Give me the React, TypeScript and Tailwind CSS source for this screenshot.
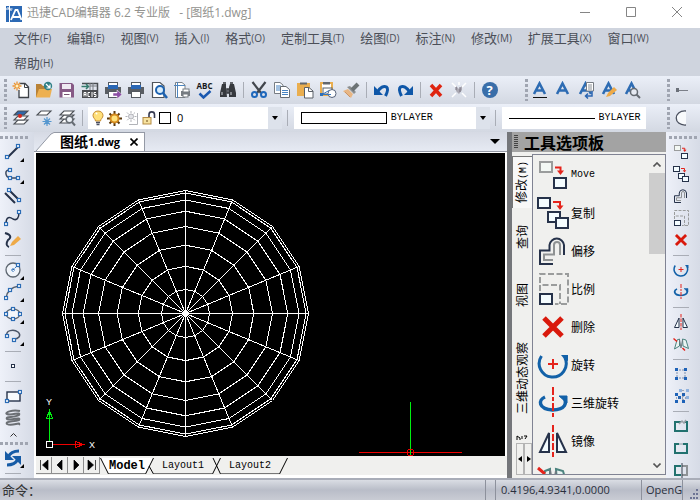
import React from "react";
import type { ReactNode } from "react";

const NAVY = "#26324a";
const RED = "#e5231b";

function Svg({ size = 18, box = 18, children }: { size?: number; box?: number; children: ReactNode }) {
  return (
    <svg width={size} height={size} viewBox={`0 0 ${box} ${box}`} fill="none" className="shrink-0" aria-hidden="true">
      {children}
    </svg>
  );
}

/* ---------- modify icons, shared by the palette (32px) and the right toolbar (16px) ---------- */

type Sized = { size?: number };

const MoveIcon = ({ size = 32 }: Sized) => (
  <Svg size={size} box={32}>
    <rect x="3" y="3" width="12" height="10" stroke="#9a9c9c" strokeWidth="2" fill="#f3f8f4" />
    <rect x="17" y="19" width="12" height="10" stroke={NAVY} strokeWidth="2" fill="#f4fcff" />
    <path d="M18 8.5H23.5V12" stroke={RED} strokeWidth="2" />
    <path d="M20 11.5H27L23.5 16Z" fill={RED} />
  </Svg>
);
const CopyIcon = ({ size = 32 }: Sized) => (
  <Svg size={size} box={32}>
    <rect x="1" y="1" width="12" height="10" stroke={NAVY} strokeWidth="2" fill="#f4fcff" />
    <rect x="11" y="15" width="12" height="10" stroke={NAVY} strokeWidth="2" fill="#f4fcff" />
    <rect x="19" y="21" width="12" height="10" stroke={NAVY} strokeWidth="2" fill="#f4fcff" />
    <path d="M16 5H23V9" stroke={RED} strokeWidth="2" />
    <path d="M19.500 8.500H26.500L23 13Z" fill={RED} />
  </Svg>
);
const OffsetIcon = ({ size = 32 }: Sized) => (
  <Svg size={size} box={32}>
    <path d="M16 29H3V15.500H12.500V10A7.300 7.300 0 0 1 27 10V20" stroke={NAVY} strokeWidth="2" />
    <path d="M16 25H7V19.500H17V10A3 3 0 0 1 23 10V20" stroke="#8f9293" strokeWidth="2" />
  </Svg>
);
const ScaleIcon = ({ size = 32 }: Sized) => (
  <Svg size={size} box={32}>
    <path d="M3 10V1H31V31H18" stroke="#9a9c9c" strokeWidth="2" strokeDasharray="6 2.500" />
    <path d="M3 18V12H23V31" stroke="#9a9c9c" strokeWidth="2" strokeDasharray="6 2.500" />
    <rect x="3" y="21" width="12" height="10" stroke={NAVY} strokeWidth="2" fill="#f4fcff" />
  </Svg>
);
const DeleteIcon = ({ size = 32 }: Sized) => (
  <Svg size={size} box={32}>
    <path d="M7 7L25 25M25 7L7 25" stroke="#d9190c" strokeWidth="5" />
  </Svg>
);
const RotateIcon = ({ size = 32 }: Sized) => (
  <Svg size={size} box={32}>
    <path d="M4.500 7A13.500 13.500 0 1 0 28 9" stroke="#1261a8" strokeWidth="3" />
    <path d="M24 6H31V12L28 11Z" fill="#1261a8" />
    <path d="M16 10V20M11 15H21" stroke={RED} strokeWidth="2" />
  </Svg>
);
const Rotate3dIcon = ({ size = 32 }: Sized) => (
  <Svg size={size} box={32}>
    <path d="M8 10C1 13 1 22 15.500 23C29 22.500 30 16 27 10.500" stroke="#1261a8" strokeWidth="3.500" />
    <path d="M22 9H30V16L26 12.500Z" fill="#1261a8" stroke="#1261a8" />
    <path d="M16 0V30" stroke={RED} strokeWidth="2" strokeDasharray="8 2 4 2" />
  </Svg>
);
const MirrorIcon = ({ size = 32 }: Sized) => (
  <Svg size={size} box={32}>
    <path d="M12 8V27H3ZM20 8V27H29Z" stroke={NAVY} strokeWidth="2" fill="#f4fcff" />
    <path d="M16 0V32" stroke={RED} strokeWidth="2" strokeDasharray="7 2" />
  </Svg>
);
const Mirror3dIcon = ({ size = 32 }: Sized) => (
  <Svg size={size} box={32}>
    <path d="M8 8L13 6V20L3 26ZM19 6L26 8L31 25L20 20Z" stroke="#4c837f" strokeWidth="2" fill="#eaf3f2" />
    <path d="M13 7L16 24M19 8L16 24" stroke="#6f7a80" strokeWidth="2" />
    <path d="M1 5L8 11M19 24L24 29" stroke={RED} strokeWidth="3" />
  </Svg>
);

/* ---------- standard toolbar icons ---------- */

const NewIcon = () => (
  <Svg>
    <path d="M7 2.500H13L16.500 6V16.500H7V9" stroke="#3e4248" strokeWidth="1.300" fill="#fff" />
    <path d="M12.500 2.500V6.500H16.500" stroke="#3e4248" />
    <path d="M5 0.500V9.500M0.500 5H9.500M2 2L8 8M8 2L2 8" stroke="#eb9433" strokeWidth="1.300" />
    <circle cx="5" cy="5" r="1.500" fill="#fff3c0" />
  </Svg>
);
const OpenIcon = () => (
  <Svg>
    <path d="M1 16V3H6L8 5H11V8H15V16Z" fill="#b98237" />
    <path d="M1 16.500L4 8H17L15 16.500Z" fill="#edb050" />
    <circle cx="13" cy="5" r="4.200" fill="#2f7f86" />
    <path d="M11 3L15 7M15 3.500V7H11.500" stroke="#fff" strokeWidth="1.200" />
  </Svg>
);
const SaveIcon = () => (
  <Svg>
    <path d="M1.500 2H14L16 4V16.500H1.500Z" fill="#875a86" />
    <path d="M4 3H13V8H4Z" fill="#efe9f2" />
    <path d="M4.500 11H13V16.500H4.500Z" fill="#fff" />
    <path d="M6 13.500H11.500" stroke="#75506f" />
  </Svg>
);
const AcisIcon = () => (
  <Svg>
    <path d="M1 2.500H16.500V16" stroke="#4a4e52" strokeWidth="1.500" />
    <path d="M9 2V9M12 2V9M9 5H16" stroke="#777b80" />
    <rect x="1" y="9" width="16" height="8" fill="#4a4c50" />
    <path d="M3 15.500V11.500H5V15.500M3 13.500H5M9 11.500H7V15.500H9M11 11V16M15 11.500H13V13.500H15V15.500H13" stroke="#fff" />
    <path d="M0.500 5.500H7M5 3L7.500 5.500L5 8" stroke="#357b6e" strokeWidth="1.500" />
  </Svg>
);
const Printer = () => (
  <>
    <rect x="4.500" y="1.500" width="9" height="5" fill="#fff" stroke="#555a60" />
    <path d="M1 6H17V13H1Z" fill="#5a5e63" />
    <rect x="4" y="4" width="10" height="4" fill="#2a67b5" />
    <rect x="4.500" y="10.500" width="9" height="6" fill="#fff" stroke="#555a60" />
  </>
);
const PrintIcon = () => (
  <Svg>
    <Printer />
  </Svg>
);
const ExportIcon = () => (
  <Svg>
    <Printer />
    <path d="M9 12H13V9L18 13.500L13 18V15H9Z" fill="#8c4fa5" stroke="#fff" strokeWidth=".5" />
  </Svg>
);
const PreviewIcon = () => (
  <Svg>
    <path d="M2.500 1.500H10L14 5V16.500H2.500Z" fill="#fff" stroke="#50555b" strokeWidth="1.200" />
    <circle cx="10" cy="9" r="4" fill="#d9edfb" stroke="#1d62b0" strokeWidth="2" />
    <path d="M13 12L17 17" stroke="#1d62b0" strokeWidth="2.500" />
  </Svg>
);
const PageSetupIcon = () => (
  <Svg>
    <path d="M2.500 1.500H9L12 4V16.500H2.500Z" fill="#fff" stroke="#7d8389" />
    <path d="M4.500 1V17M1 4.500H12" stroke="#4e86c0" />
    <rect x="8" y="10" width="9" height="5" fill="#777c82" />
    <rect x="10" y="8" width="6" height="3" fill="#fff" stroke="#777c82" />
    <rect x="10" y="13" width="5" height="3" fill="#fff" stroke="#777c82" />
  </Svg>
);
const SpellIcon = () => (
  <span className="flex flex-col items-center">
    <span className="font-['Open_Sans',sans-serif] text-[8px] leading-[8px] font-bold text-[#17191c]">ABC</span>
    <svg width="14" height="9" viewBox="0 0 14 9" fill="none">
      <path d="M1.500 3.500L5.500 7.500L12.500 1" stroke="#1a58b0" strokeWidth="2.500" />
    </svg>
  </span>
);
const FindIcon = () => (
  <Svg>
    <path d="M3 3H7V6L8 16H1V12ZM11 3H15L17 12V16H10V6Z" fill="#36393e" />
    <path d="M4 2H7M11 2H14M8 8H10V12H8Z" stroke="#36393e" strokeWidth="1.500" />
    <path d="M3 11V14M12 11V14" stroke="#cdd1d7" />
  </Svg>
);
const CutIcon = () => (
  <Svg>
    <path d="M2.500 1L11 12M15.500 1L7 12" stroke="#42464d" strokeWidth="2.200" />
    <circle cx="4.500" cy="13.500" r="2.500" stroke="#1f68bc" strokeWidth="2" />
    <circle cx="13.500" cy="13.500" r="2.500" stroke="#1f68bc" strokeWidth="2" />
  </Svg>
);
const CopyPagesIcon = () => (
  <Svg>
    <path d="M1.500 1.500H7L10 4V12.500H1.500Z" fill="#fff" stroke="#777c83" />
    <path d="M3 5H8M3 7H8M3 9H8" stroke="#4783c3" />
    <path d="M7.500 5.500H13L16.500 8.500V16.500H7.500Z" fill="#fff" stroke="#666b72" />
    <path d="M9 9.500H15M9 11.500H15M9 13.500H15" stroke="#4783c3" />
  </Svg>
);
const PasteIcon = () => (
  <Svg>
    <rect x="1" y="2" width="13" height="13" fill="#eaae4f" />
    <path d="M4 3.500V1.500H11V3.500Z" fill="#63676d" />
    <path d="M8.500 6.500H13L17 10V17H8.500Z" fill="#fff" stroke="#5b6068" />
    <path d="M12.500 6.500V10.500H17" stroke="#5b6068" />
  </Svg>
);
const PasteBlockIcon = () => (
  <Svg>
    <path d="M2 2H13V14H2Z" fill="#fff" stroke="#eaae4f" strokeWidth="2" />
    <path d="M4 3.500V1H11V3.500Z" fill="#63676d" />
    <rect x="4" y="7" width="9" height="6" fill="#fff" stroke="#596069" />
    <circle cx="13" cy="12.500" r="4" stroke="#56627a" fill="#fff" />
    <path d="M3 13.500L10 9.500M3 13.500H12" stroke="#3876bd" />
    <rect x="1" y="12" width="3" height="3" fill="#2e6fb9" />
  </Svg>
);
const BrushIcon = () => (
  <Svg>
    <path d="M1 10L6 8L11 13L9 17Z" fill="#e8b684" />
    <path d="M5 6L8 5L14 11L12 13Z" fill="#8c8f90" />
    <path d="M10 9L16 3" stroke="#6c7375" strokeWidth="4" />
    <path d="M3 11L8 16" stroke="#c89468" />
  </Svg>
);
const UndoIcon = () => (
  <Svg>
    <path d="M4.500 11C7 6 11 4.500 13.500 6C16 8 14 12 12.500 15" stroke="#0f57a8" strokeWidth="3" />
    <path d="M1 5V14H10Z" fill="#0f57a8" />
  </Svg>
);
const RedoIcon = () => (
  <Svg>
    <path d="M13.500 11C11 6 7 4.500 4.500 6C2 8 4 12 5.500 15" stroke="#0f57a8" strokeWidth="3" />
    <path d="M17 5V14H8Z" fill="#0f57a8" />
  </Svg>
);
const EraseIcon = () => (
  <Svg>
    <path d="M4 4L14 15M14 4L4 15" stroke="#df2410" strokeWidth="3.500" />
  </Svg>
);
const ExplodeIcon = () => (
  <Svg>
    <path d="M2 2L6 6M16 2L12 6M2 16L6 12M16 16L12 12M9 1V4" stroke="#fff" strokeWidth="1.500" />
    <path d="M6 5L9 8L12 5V9L9 13L6 10Z" fill="#aaa8b2" />
    <path d="M6 6V9M10 6V11" stroke="#756f7c" />
  </Svg>
);
const HelpIcon = () => (
  <span className="flex size-4 items-center justify-center rounded-full bg-[#3a6ea9] font-['Open_Sans',sans-serif] text-[13px] leading-4 font-bold text-white">
    ?
  </span>
);

const LetterA = ({ children }: { children?: ReactNode }) => (
  <Svg>
    <path d="M3 13L8.500 2.500L14 13M5.500 9.500H11.500" stroke="#2e6cb3" strokeWidth="2.600" />
    {children}
  </Svg>
);

/* ---------- layer row icons ---------- */

const sheet = (y: number, fill: string) => (
  <path d={`M6 ${y}H16L12 ${y + 4}H2Z`} stroke="#4b4f55" strokeWidth="1.100" fill={fill} />
);
const LayersIcon = () => (
  <Svg>
    {sheet(11, "#fff")}
    {sheet(7, "#fff")}
    {sheet(2, "#3067a8")}
    <circle cx="8" cy="7" r="2" fill="#d92a1e" />
  </Svg>
);
const LayerFreezeIcon = () => (
  <Svg>
    {sheet(2, "#fff")}
    <path d="M12 8V17M7.500 12.500H16.500M9 9.500L15 15.500M15 9.500L9 15.500" stroke="#5597cf" strokeWidth="1.200" />
  </Svg>
);
const LayerFindIcon = () => (
  <Svg>
    {sheet(10, "#fff")}
    {sheet(6, "#fff")}
    {sheet(2, "#fff")}
    <circle cx="11.500" cy="10.500" r="3.300" stroke="#666c73" strokeWidth="1.600" fill="#eef2f8" />
    <path d="M14 13L17 16.500" stroke="#666c73" strokeWidth="2" />
  </Svg>
);
const BulbIcon = () => (
  <svg width="12" height="16" viewBox="0 0 12 16" fill="none">
    <path d="M6 1C3 1 1 3 1 5.500C1 8 3.500 9 3.500 11H8.500C8.500 9 11 8 11 5.500C11 3 9 1 6 1Z" fill="#ffe07a" stroke="#c58c34" />
    <path d="M4 12.500H8M4.500 14.500H7.500" stroke="#4a4f60" strokeWidth="1.500" />
    <path d="M4 4L5 3" stroke="#fff" strokeWidth="2" />
  </svg>
);
const SunIcon = () => (
  <svg width="15" height="15" viewBox="0 0 15 15" fill="none">
    <path d="M7.500 0V15M0 7.500H15M2.500 2.500L12.500 12.500M12.500 2.500L2.500 12.500" stroke="#5a3a10" strokeWidth="2" />
    <circle cx="7.500" cy="7.500" r="4" fill="#ffe27a" stroke="#d48a1e" strokeWidth="2" />
  </svg>
);
const ViewportSunIcon = () => (
  <svg width="14" height="14" viewBox="0 0 14 14" fill="none">
    <path d="M6 0V11M0.500 5.500H11.500M2 1.500L10 9.500M10 1.500L2 9.500" stroke="#b1b3b8" strokeDasharray="2 1" />
    <circle cx="6" cy="5.500" r="2.500" fill="#e3e4e8" stroke="#b1b3b8" />
    <path d="M12.500 2V13.500H4" stroke="#b1b3b8" />
  </svg>
);
const LockIcon = () => (
  <svg width="14" height="14" viewBox="0 0 14 14" fill="none">
    <path d="M7 6V3.500C7 0 12.500 0 12.500 3.500V7" stroke="#35394f" strokeWidth="1.600" />
    <rect x="1" y="6.500" width="8" height="6.500" fill="#f7e3a0" stroke="#b48b45" />
    <path d="M5 9V11" stroke="#6b4a1a" />
  </svg>
);

/* ---------- draw toolbar icons ---------- */

const Node = ({ x, y }: { x: number; y: number }) => (
  <rect x={x - 1.5} y={y - 1.5} width="3" height="3" fill="#fff" stroke="#2b6cb5" strokeWidth="1.200" />
);
const LineIcon = () => (
  <Svg>
    <path d="M4 14L14 4" stroke={NAVY} strokeWidth="2" />
    <Node x={3} y={14} />
    <Node x={14} y={3} />
  </Svg>
);
const PolylineIcon = () => (
  <Svg>
    <path d="M6 5C0 4 1 12 6 13H14" stroke="#3d4a60" strokeWidth="1.500" />
    <Node x={6} y={5} />
    <Node x={6} y={13} />
    <Node x={14} y={13} />
  </Svg>
);
const DoubleLineIcon = () => (
  <Svg>
    <path d="M5 3L15 13M1 6L11 16" stroke={NAVY} strokeWidth="2" />
    <Node x={5} y={3} />
    <Node x={15} y={13} />
  </Svg>
);
const SplineIcon = () => (
  <Svg>
    <path d="M2 15C2 7 6 8 9 10C13 12 15 9 15 3" stroke={NAVY} strokeWidth="1.500" />
    <Node x={2} y={15} />
    <Node x={15} y={3} />
  </Svg>
);
const SketchIcon = () => (
  <Svg>
    <path d="M1 2C8 4 7 7 4 9C2 12 2 15 5 16" stroke={NAVY} strokeWidth="2" />
    <path d="M6 15L8 11L14 5L17 8L10 14Z" fill="#eeaa48" />
  </Svg>
);
const CircleIcon = () => (
  <Svg>
    <circle cx="9" cy="9" r="7" stroke="#5d6670" strokeWidth="1.300" fill="#f0f4fa" />
    <path d="M9 9L14 4M7 9H11M9 7V11" stroke="#2b6cb5" strokeDasharray="2 1" />
    <Node x={14} y={4} />
  </Svg>
);
const ArcIcon = () => (
  <Svg>
    <path d="M2 15C3 8 8 4 15 3" stroke="#59616d" strokeWidth="1.500" />
    <Node x={2} y={15} />
    <Node x={6} y={7} />
    <Node x={15} y={3} />
  </Svg>
);
const EllipseIcon = () => (
  <Svg>
    <ellipse cx="9" cy="9" rx="7" ry="5" stroke="#5d6670" strokeWidth="1.300" fill="#f4f7fb" />
    <Node x={2} y={9} />
    <Node x={16} y={9} />
    <Node x={9} y={4} />
    <Node x={9} y={14} />
  </Svg>
);
const EllipseArcIcon = () => (
  <Svg>
    <path d="M3 9C1 3 10 2 14 5C18 9 14 12 10 12" stroke="#4b5567" strokeWidth="1.500" />
    <Node x={3} y={9} />
    <Node x={10} y={13} />
  </Svg>
);
const PointIcon = () => (
  <Svg>
    <rect x="7.500" y="7.500" width="3" height="3" stroke={NAVY} fill="#fff" />
  </Svg>
);
const RectIcon = () => (
  <Svg>
    <rect x="3" y="5" width="13" height="9" stroke={NAVY} strokeWidth="1.400" fill="#f7fafd" />
    <Node x={3} y={14} />
    <Node x={16} y={5} />
  </Svg>
);
const SpringIcon = () => (
  <Svg>
    <path d="M16 2C8 0 0 4 3 5C8 7 17 2 15 6C10 9 1 7 3 10C8 12 17 7 15 11C9 13 1 12 3 15C8 18 17 12 15 16" stroke="#6b6f74" strokeWidth="2" />
  </Svg>
);
const RegenIcon = () => (
  <Svg>
    <path d="M15 2C10 2 6 4 4 8" stroke="#165ba6" strokeWidth="3" />
    <path d="M1 2V11H10Z" fill="#165ba6" />
    <path d="M3 16C8 16 12 14 14 10" stroke="#165ba6" strokeWidth="3" />
    <path d="M17 16V7H8Z" fill="#165ba6" />
  </Svg>
);

/* ---------- extra icons of the right toolbar ---------- */

const ArrayIcon = () => (
  <Svg>
    <path d="M4 5H14M4 13H14M5 4V14M13 4V14" stroke="#7c8fae" strokeDasharray="2 1" />
    <path d="M3 3H6V6H3ZM12 3H15V6H12ZM3 12H6V15H3ZM12 12H15V15H12Z" fill="#1d62b8" />
  </Svg>
);
const Array3dIcon = () => (
  <Svg>
    <path d="M7 2H10V5H7ZM14 2H17V5H14ZM14 9H17V12H14Z" fill="#8fb2de" />
    <path d="M3 6H6V9H3ZM10 6H13V9H10ZM3 13H6V16H3ZM10 13H13V16H10ZM6 9H9V12H6Z" fill="#1d62b8" />
    <path d="M4 11H16M11 3V15" stroke="#53627c" strokeDasharray="1 2" />
  </Svg>
);
const BreakIcon = () => (
  <Svg>
    <path d="M9 5H3V14H15V5H13" stroke="#21716f" strokeWidth="2" />
    <path d="M7 7L10 4L12 6L14 3" stroke="#9aa0a6" strokeWidth="1.500" />
  </Svg>
);
const JoinIcon = () => (
  <Svg>
    <path d="M7 5H3V14H15V5H11" stroke="#21716f" strokeWidth="2" />
    <path d="M7 5H11" stroke="#8a98a0" />
  </Svg>
);
const SplitIcon = () => (
  <Svg>
    <path d="M9 5H3V14H9" stroke="#21716f" strokeWidth="2" />
    <path d="M10 5H15V14H10" stroke="#8e9296" strokeWidth="2" />
    <path d="M10 2V17" stroke="#333c4a" />
  </Svg>
);

/* ---------- bars ---------- */

type Item = { label: string; icon: ReactNode; fly?: boolean } | "sep";

const standard: Item[] = [
  { label: "新建", icon: <NewIcon /> },
  { label: "打开", icon: <OpenIcon /> },
  { label: "保存", icon: <SaveIcon /> },
  { label: "ACIS", icon: <AcisIcon /> },
  { label: "输出", icon: <ExportIcon /> },
  { label: "打印", icon: <PrintIcon /> },
  { label: "打印预览", icon: <PreviewIcon /> },
  { label: "页面设置", icon: <PageSetupIcon /> },
  { label: "拼写检查", icon: <SpellIcon /> },
  { label: "查找", icon: <FindIcon /> },
  "sep",
  { label: "剪切", icon: <CutIcon /> },
  { label: "复制", icon: <CopyPagesIcon /> },
  { label: "粘贴", icon: <PasteIcon /> },
  { label: "粘贴为块", icon: <PasteBlockIcon /> },
  { label: "特性匹配", icon: <BrushIcon /> },
  "sep",
  { label: "撤销", icon: <UndoIcon /> },
  { label: "重做", icon: <RedoIcon /> },
  "sep",
  { label: "删除", icon: <EraseIcon /> },
  { label: "分解", icon: <ExplodeIcon /> },
  "sep",
  { label: "帮助", icon: <HelpIcon /> },
];

const textTools: Item[] = [
  { label: "多行文字", icon: <LetterA><path d="M2 16.500H16" stroke="#111" /></LetterA> },
  { label: "单行文字", icon: <LetterA /> },
  {
    label: "文字样式",
    icon: (
      <LetterA>
        <path d="M9.500 1.500H16.500V10H9.500Z" fill="#fff" stroke="#777c84" />
        <path d="M11 4H15M11 6H15M11 8H15" stroke="#888d94" />
        <path d="M15 10V15H9M11 12.500L8.500 15L11 17.500" stroke="#2b66b2" strokeWidth="1.500" />
      </LetterA>
    ),
  },
  { label: "编辑文字", icon: <LetterA><path d="M6 16L8 12L14 6L17 9L10 15Z" fill="#eeaa48" /></LetterA> },
  {
    label: "查找文字",
    icon: (
      <LetterA>
        <circle cx="11" cy="11" r="3.500" fill="#e6eaf2" stroke="#656b72" strokeWidth="1.500" />
        <path d="M13.500 13.500L17 17" stroke="#656b72" strokeWidth="2" />
      </LetterA>
    ),
  },
];

const layerTools: Item[] = [
  { label: "图层", icon: <LayersIcon /> },
  { label: "冻结图层", icon: <LayerFreezeIcon /> },
  { label: "查找图层", icon: <LayerFindIcon /> },
  "sep",
];

const drawTools: Item[] = [
  { label: "直线", icon: <LineIcon />, fly: true },
  { label: "多段线", icon: <PolylineIcon />, fly: true },
  { label: "双线", icon: <DoubleLineIcon /> },
  { label: "样条曲线", icon: <SplineIcon /> },
  { label: "徒手画", icon: <SketchIcon /> },
  "sep",
  { label: "圆", icon: <CircleIcon />, fly: true },
  { label: "圆弧", icon: <ArcIcon />, fly: true },
  { label: "椭圆", icon: <EllipseIcon />, fly: true },
  { label: "椭圆弧", icon: <EllipseArcIcon />, fly: true },
  "sep",
  { label: "点", icon: <PointIcon /> },
  "sep",
  { label: "矩形", icon: <RectIcon /> },
  { label: "螺旋", icon: <SpringIcon /> },
];

const modifyTools: Item[] = [
  { label: "移动", icon: <MoveIcon size={16} /> },
  { label: "复制对象", icon: <CopyIcon size={16} /> },
  { label: "偏移", icon: <OffsetIcon size={16} /> },
  { label: "比例", icon: <ScaleIcon size={16} /> },
  { label: "删除", icon: <DeleteIcon size={18} /> },
  "sep",
  { label: "旋转", icon: <RotateIcon size={16} /> },
  { label: "三维旋转", icon: <Rotate3dIcon size={16} /> },
  "sep",
  { label: "镜像", icon: <MirrorIcon size={16} /> },
  { label: "三维镜像", icon: <Mirror3dIcon size={16} /> },
  "sep",
  { label: "阵列", icon: <ArrayIcon /> },
  { label: "三维阵列", icon: <Array3dIcon /> },
  "sep",
  { label: "打断", icon: <BreakIcon /> },
  { label: "合并", icon: <JoinIcon /> },
  { label: "修剪", icon: <SplitIcon /> },
];

function HTools({ items }: { items: Item[] }) {
  return (
    <>
      {items.map((it, i) =>
        it === "sep" ? (
          <span key={i} className="flex w-2 shrink-0 justify-center">
            <span className="h-4 w-px bg-[#a9adb6]" />
          </span>
        ) : (
          <button key={i} aria-label={it.label} className="flex h-6 w-[23px] shrink-0 items-center justify-center">
            {it.icon}
          </button>
        )
      )}
    </>
  );
}

function VTools({ items }: { items: Item[] }) {
  return (
    <>
      {items.map((it, i) =>
        it === "sep" ? (
          <span key={i} className="flex h-2 w-4 shrink-0 items-center">
            <span className="h-px w-full bg-[#a9adb6]" />
          </span>
        ) : (
          <button key={i} aria-label={it.label} className="relative flex h-[22px] w-6 shrink-0 items-center justify-center">
            {it.icon}
            {it.fly && (
              <svg width="4" height="4" viewBox="0 0 4 4" className="absolute right-px bottom-px">
                <path d="M4 0V4H0Z" fill="#000" />
              </svg>
            )}
          </button>
        )
      )}
    </>
  );
}

const VGrip = () => <span className="h-[22px] w-[3px] shrink-0 bg-[repeating-linear-gradient(to_bottom,#a0a5b1_0_3px,transparent_3px_5px)]" />;
const HGrip = () => <span className="h-[3px] w-7 shrink-0 bg-[repeating-linear-gradient(to_right,#a0a5b1_0_3px,transparent_3px_5px)]" />;

const Caret = () => (
  <span className="pointer-events-none flex h-full w-[14px] shrink-0 items-center justify-center bg-[#dde2eb]">
    <svg width="6" height="4" viewBox="0 0 6 4">
      <path d="M0 0H6L3 4Z" fill="#000" />
    </svg>
  </span>
);
const BarLine = () => (
  <span className="flex w-3 shrink-0 justify-center">
    <span className="h-4 w-px bg-[#a9adb6]" />
  </span>
);

const menus = [
  ["文件", "(F)"],
  ["编辑", "(E)"],
  ["视图", "(V)"],
  ["插入", "(I)"],
  ["格式", "(O)"],
  ["定制工具", "(T)"],
  ["绘图", "(D)"],
  ["标注", "(N)"],
  ["修改", "(M)"],
  ["扩展工具", "(X)"],
  ["窗口", "(W)"],
  ["帮助", "(H)"],
];

/* ---------- drawing ---------- */

const CX = 149.5;
const CY = 160.5;
const R = 123;

function ring(k: number) {
  const r = R * Math.sin((k * Math.PI) / 16);
  return Array.from({ length: 16 }, (_, i) => {
    const a = (i * Math.PI) / 8;
    return `${(CX + r * Math.cos(a)).toFixed(1)},${(CY + r * Math.sin(a)).toFixed(1)}`;
  }).join(" ");
}

function Drawing() {
  return (
    <svg className="block size-full" shapeRendering="crispEdges" fill="none" role="img" aria-label="Model">
      <g stroke="#fff">
        {[1, 2, 3, 4, 5, 6, 7, 8].map((k) => (
          <polygon key={k} points={ring(k)} />
        ))}
        {Array.from({ length: 8 }, (_, i) => {
          const a = (i * Math.PI) / 8;
          const dx = R * Math.cos(a);
          const dy = R * Math.sin(a);
          return <line key={i} x1={CX - dx} y1={CY - dy} x2={CX + dx} y2={CY + dy} />;
        })}
      </g>
      <path d="M13.500 288V258M10.500 265.500H16.500L13.500 257.500Z" stroke="#00f010" />
      <path d="M17 291.500H47M39.500 288.500V294.500L47.500 291.500Z" stroke="#f00000" />
      <rect x="10.500" y="288.500" width="6" height="6" stroke="#fff" />
      <g fill="#fff" className="font-['Liberation_Sans',sans-serif] text-[9px]">
        <text x="10" y="252">Y</text>
        <text x="53" y="295">X</text>
      </g>
      <path d="M323 299.500H426" stroke="#f00000" />
      <path d="M374.500 249V304" stroke="#00f010" />
      <path d="M372.500 296.500H376.500L377.500 298V301L376.500 302.500H372.500L371.500 301V298Z" stroke="#f00000" />
    </svg>
  );
}

const Slash = ({ d, fill }: { d: string; fill?: string }) => (
  <svg width="9" height="16" viewBox="0 0 9 16" fill="none" className="shrink-0">
    {fill && <path d={fill} fill="#fff" />}
    <path d={d} stroke="#000" />
  </svg>
);

const navs = [
  ["首页", "M4.500 3V13M12 3V13L6.500 8Z"],
  ["上一页", "M10 3V13L5 8Z"],
  ["下一页", "M6 3V13L11 8Z"],
  ["末页", "M4 3V13L9.500 8ZM11.500 3V13"],
];

const palette: [string, ReactNode][] = [
  ["Move", <MoveIcon />],
  ["复制", <CopyIcon />],
  ["偏移", <OffsetIcon />],
  ["比例", <ScaleIcon />],
  ["删除", <DeleteIcon />],
  ["旋转", <RotateIcon />],
  ["三维旋转", <Rotate3dIcon />],
  ["镜像", <MirrorIcon />],
];

const vtext = "[writing-mode:vertical-rl] [text-orientation:sideways] rotate-180";

export default function App() {
  return (
    <div className="flex h-screen flex-col overflow-hidden bg-[#dde2ec] font-['Noto_Sans_CJK_SC',sans-serif] text-xs text-black">
      <header className="flex h-7 shrink-0 items-center bg-white pl-[6px]">
        <svg width="16" height="16" viewBox="0 0 16 16" fill="none">
          <rect width="16" height="16" fill="#2c69b4" />
          <path d="M5 14L9.500 4H11.500L15.500 14M7 11H14" stroke="#fff" strokeWidth="1.800" />
          <path d="M3.500 5V16M0 3H6.500M3.500 0V6M1.500 1L5.500 5" stroke="#fff" />
        </svg>
        <h1 className="ml-[5px] pb-0.5 font-['Open_Sans','Noto_Sans_CJK_SC',sans-serif] text-xs text-[#93938f]">
          迅捷CAD编辑器 6.2 专业版&nbsp;&nbsp; - [图纸1.dwg]
        </h1>
        <div className="ml-auto flex pb-1">
          {[
            ["最小化", "M0 5.500H10"],
            ["最大化", "M0.500 0.500H9.500V9.500H0.500Z"],
            ["关闭", "M0 0L10 10M10 0L0 10"],
          ].map(([label, d]) => (
            <button key={label} aria-label={label} className="flex h-6 w-[46px] items-center justify-center">
              <svg width="10" height="10" viewBox="0 0 10 10" fill="none">
                <path d={d} stroke="#858585" />
              </svg>
            </button>
          ))}
        </div>
      </header>

      <nav className="flex shrink-0 flex-wrap gap-x-4 gap-y-0.5 bg-[#cfd4de] pr-10 pl-[14px] text-[#4b4f58]">
        {menus.map(([t, k]) => (
          <button key={t} className="flex h-[23px] items-center pb-[3px] text-[13px]">
            {t}
            <span className="pt-0.5 font-['Open_Sans',sans-serif] text-[10px]">{k}</span>
          </button>
        ))}
      </nav>

      <div className="flex h-7 shrink-0 items-center bg-linear-to-b from-[#ebeff8] to-[#d3d8e2] pl-1">
        <VGrip />
        <span className="w-[2px]" />
        <HTools items={standard} />
        <span className="w-6 shrink-0" />
        <VGrip />
        <HTools items={textTools} />
        <span className="ml-auto flex w-[33px] shrink-0 items-center gap-1">
          <VGrip />
          <button aria-label="线性标注" className="flex items-center">
            <svg width="14" height="6" viewBox="0 0 14 6">
              <path d="M3 3.500H14" stroke="#7b7f88" />
              <rect x="2" y="1" width="3" height="4" fill="#6b7079" />
            </svg>
          </button>
        </span>
      </div>

      <div className="flex h-7 shrink-0 items-center bg-linear-to-b from-[#ebeff8] to-[#d3d8e2] pl-1">
        <VGrip />
        <span className="w-[2px]" />
        <HTools items={layerTools} />
        <label className="ml-0.5 flex h-[22px] min-w-0 flex-[196] items-center gap-[3px] bg-white pl-1">
          <BulbIcon />
          <SunIcon />
          <ViewportSunIcon />
          <LockIcon />
          <span className="size-3 shrink-0 border border-black" />
          <select aria-label="图层列表" className="ml-[3px] min-w-0 flex-1 appearance-none bg-transparent font-['Open_Sans',sans-serif] text-[11px]">
            <option>0</option>
          </select>
          <Caret />
        </label>
        <BarLine />
        <label className="flex h-[22px] min-w-0 flex-[195] items-center gap-1 bg-white pl-[7px]">
          <span className="h-3 w-[86px] shrink-0 border border-black" />
          <select aria-label="颜色" className="min-w-0 flex-1 appearance-none bg-transparent font-['Liberation_Mono',monospace] text-[10px]">
            <option>BYLAYER</option>
          </select>
          <Caret />
        </label>
        <BarLine />
        <label className="flex h-[22px] min-w-0 flex-[142] items-center gap-1 bg-white pl-[7px]">
          <span className="h-px w-[86px] shrink-0 bg-black" />
          <select aria-label="线型" className="min-w-0 flex-1 appearance-none bg-transparent font-['Liberation_Mono',monospace] text-[10px]">
            <option>BYLAYER</option>
          </select>
        </label>
        <span className="ml-[21px] flex w-[33px] shrink-0 items-center gap-1">
          <VGrip />
          <button aria-label="圆形标注">
            <svg width="12" height="18" viewBox="0 0 12 18" fill="none">
              <path d="M12 2C-1 1 -1 17 12 16Z" fill="#f8fafc" />
              <path d="M12 2C-1 1 -1 17 12 16" stroke="#4c5260" strokeWidth="1.300" />
            </svg>
          </button>
        </span>
      </div>

      <main className="flex min-h-0 flex-1">
        <aside className="flex w-[34px] shrink-0 flex-col overflow-hidden bg-linear-to-r from-[#eef1f9] to-[#d6dbe6] pt-1">
          <HGrip />
          <div className="flex flex-col pt-0.5 pl-[1px]">
            <div className="flex w-6 flex-col items-center">
              <VTools items={drawTools} />
              <button aria-label="更多" className="flex h-[11px] items-center">
                <svg width="7" height="4" viewBox="0 0 7 4" fill="none">
                  <path d="M0.500 3.500L3.500 0.500L6.500 3.500" stroke="#333" />
                </svg>
              </button>
            </div>
          </div>
          <span className="flex h-[7px] items-center">
            <HGrip />
          </span>
          <div className="flex w-[25px] flex-col items-center pl-[1px]">
            <VTools items={[{ label: "重生成", icon: <RegenIcon />, fly: true }, "sep"]} />
          </div>
        </aside>

        <section className="flex min-w-0 flex-1 flex-col">
          <div className="flex h-5 shrink-0 items-end justify-between border-b border-[#9499a5] bg-[#dfe4ee] bg-linear-to-b from-[#d6dae4] to-[#e6eaf3] pr-[7px]">
            <div className="flex h-[19px] items-stretch">
              <svg width="20" height="19" viewBox="0 0 20 19" fill="none">
                <path d="M2 19L17 2L20 0.500V19Z" fill="#fff" />
                <path d="M2 19L17 2L20 0.500" stroke="#9499a5" />
              </svg>
              <div className="flex items-center border-t border-r border-[#9499a5] bg-white pr-[6px] pl-[6px]">
                <span className="flex items-center pb-0.5 text-sm font-bold">
                  图纸<span className="pt-0.5 font-['Open_Sans',sans-serif] text-[11px]">1.dwg</span>
                </span>
                <button aria-label="关闭图纸" className="ml-[10px]">
                  <svg width="8" height="8" viewBox="0 0 8 8" fill="none">
                    <path d="M0.500 0.500L7.500 7.500M7.500 0.500L0.500 7.500" stroke="#000" strokeWidth="1.600" />
                  </svg>
                </button>
              </div>
            </div>
            <button aria-label="图纸列表" className="mb-[7px]">
              <svg width="10" height="5" viewBox="0 0 10 5">
                <path d="M0 0H10L5 5Z" fill="#000" />
              </svg>
            </button>
          </div>
          <div className="min-h-0 flex-1 border-x-2 border-t border-white bg-black">
            <Drawing />
          </div>
          <div className="flex h-[19px] shrink-0 items-center border-l-2 border-white bg-[#f0f0ee] font-['Liberation_Mono',monospace]">
            {navs.map(([label, d]) => (
              <button key={label} aria-label={label} className="h-[17px] w-4 border-r border-b border-[#8e8e8e]">
                <svg width="15" height="16" viewBox="0 0 15 16">
                  <path d={d} fill="#000" stroke="#000" strokeWidth=".7" />
                </svg>
              </button>
            ))}
            <Slash d="M0.500 0L8.500 16" fill="M0 0H9V16Z" />
            <button className="h-4 border-b border-[#777] bg-white text-xs leading-4 font-bold">Model</button>
            <Slash d="M8.500 0L0.500 16M4 8L8.500 16" fill="M0 0H8L0 16Z" />
            <button className="h-4 border-b border-[#777] px-2 text-[10px] leading-4">Layout1</button>
            <Slash d="M8.500 0L0.500 16M1 0L8.500 16" />
            <button className="h-4 border-b border-[#777] px-2 text-[10px] leading-4">Layout2</button>
            <Slash d="M8.500 0L0.500 16" />
          </div>
          <div className="h-[3px] shrink-0 bg-white" />
        </section>

        <aside className="flex w-[159px] shrink-0 flex-col border-l-[5px] border-[#74767a] bg-[#f0f0ee]">
          <h2 className="flex h-5 shrink-0 items-center bg-[#a3a3a3] pl-[2px] text-base leading-5 font-bold">
            <span className="mr-1.5 h-[14px] w-[4px] bg-[repeating-linear-gradient(to_bottom,#444_0_1px,transparent_1px_2px)]" />
            工具选项板
          </h2>
          <div className="flex min-h-0 flex-1 pt-[2px] pb-[3px]">
            <div className="flex w-5 shrink-0 flex-col overflow-hidden text-xs leading-4">
              <button className="mt-[2px] flex h-[52px] shrink-0 items-center justify-center border-t border-l border-[#777] bg-[#f8f8f8]">
                <span className={vtext}>
                  修改<span className="font-['Liberation_Mono',monospace] text-[10px]">(M)</span>
                </span>
              </button>
              <button className="flex h-[58px] shrink-0 items-center justify-center">
                <span className={vtext}>查询</span>
              </button>
              <button className="flex h-[58px] shrink-0 items-center justify-center">
                <span className={vtext}>视图</span>
              </button>
              <button className="flex h-[108px] shrink-0 items-center justify-center">
                <span className={vtext}>三维动态观察</span>
              </button>
              <span className="flex h-[9px] items-end justify-center overflow-hidden">
                <svg width="12" height="6" viewBox="0 0 12 6" fill="none">
                  <path d="M1 5V1L4 3V5M6 1V4M8 1H11L9 4" stroke="#000" />
                </svg>
              </span>
              <div className="mt-auto flex justify-end">
                {["M5 2V8L1 5Z", "M2 2V8L6 5Z"].map((d, i) => (
                  <button key={i} aria-label={i ? "向后" : "向前"} className="flex h-8 w-2 items-center border border-[#b4b4b4]">
                    <svg width="6" height="10" viewBox="0 0 6 10">
                      <path d={d} fill="#000" />
                    </svg>
                  </button>
                ))}
              </div>
            </div>
            <div className="flex min-w-0 flex-1 border border-[#808393]">
              <ul className="min-w-0 flex-1 overflow-hidden pt-px">
                {palette.map(([t, icon]) => (
                  <li key={t} className="h-[38px]">
                    <button
                      className={`flex h-full items-center gap-[2px] pl-1 whitespace-nowrap ${
                        t === "Move" ? "font-['Liberation_Mono',monospace] text-[10px]" : ""
                      }`}
                    >
                      {icon}
                      {t}
                    </button>
                  </li>
                ))}
                <li>
                  <button aria-label="三维镜像" className="flex pt-[3px] pl-1">
                    <Mirror3dIcon />
                  </button>
                </li>
              </ul>
              <div className="flex w-4 shrink-0 flex-col items-center bg-[#f0f0ee]">
                <button aria-label="向上滚动" className="flex h-[18px] items-center">
                  <svg width="8" height="5" viewBox="0 0 8 5" fill="none">
                    <path d="M0.500 4.500L4 1L7.500 4.500" stroke="#555" strokeWidth="1.600" />
                  </svg>
                </button>
                <span className="h-[81px] w-full bg-[#cdcdcd]" />
                <button aria-label="向下滚动" className="mt-auto flex h-[18px] items-center">
                  <svg width="8" height="5" viewBox="0 0 8 5" fill="none">
                    <path d="M0.500 0.500L4 4L7.500 0.500" stroke="#555" strokeWidth="1.600" />
                  </svg>
                </button>
              </div>
            </div>
          </div>
        </aside>

        <aside className="flex w-[34px] shrink-0 flex-col overflow-hidden bg-linear-to-r from-[#eef1f9] to-[#d6dbe6] pt-1 pl-[3px]">
          <HGrip />
          <div className="flex w-6 flex-col items-center pt-0.5">
            <VTools items={modifyTools} />
          </div>
        </aside>
      </main>

      <footer className="flex h-[22px] shrink-0 items-stretch border-t-2 border-[#a9adb8] bg-linear-to-b from-[#dadde4] via-[#b9bdc8] to-[#c9ccd4] font-['Open_Sans','Noto_Sans_CJK_SC',sans-serif] text-[11px] leading-4 text-[#2a2f3d]">
        <label className="flex min-w-0 flex-1 items-center pl-[2px] text-[13px] text-[#333]">
          命令：
          <input aria-label="命令" className="min-w-0 flex-1 bg-transparent outline-none" />
        </label>
        <span className="w-[11px] border-x border-[#8d919c]" />
        <output className="flex w-[145px] items-center pl-[5px]">0.4196,4.9341,0.0000</output>
        <span className="flex w-[42px] items-center overflow-hidden border-x border-[#8d919c] pl-1">OpenG</span>
        <svg width="17" height="20" viewBox="0 0 17 20">
          <path d="M13 9h2v2h-2zM10 13h2v2h-2zM13 13h2v2h-2zM7 17h2v2h-2zM10 17h2v2h-2zM13 17h2v2h-2z" fill="#6d7494" />
        </svg>
      </footer>
    </div>
  );
}
